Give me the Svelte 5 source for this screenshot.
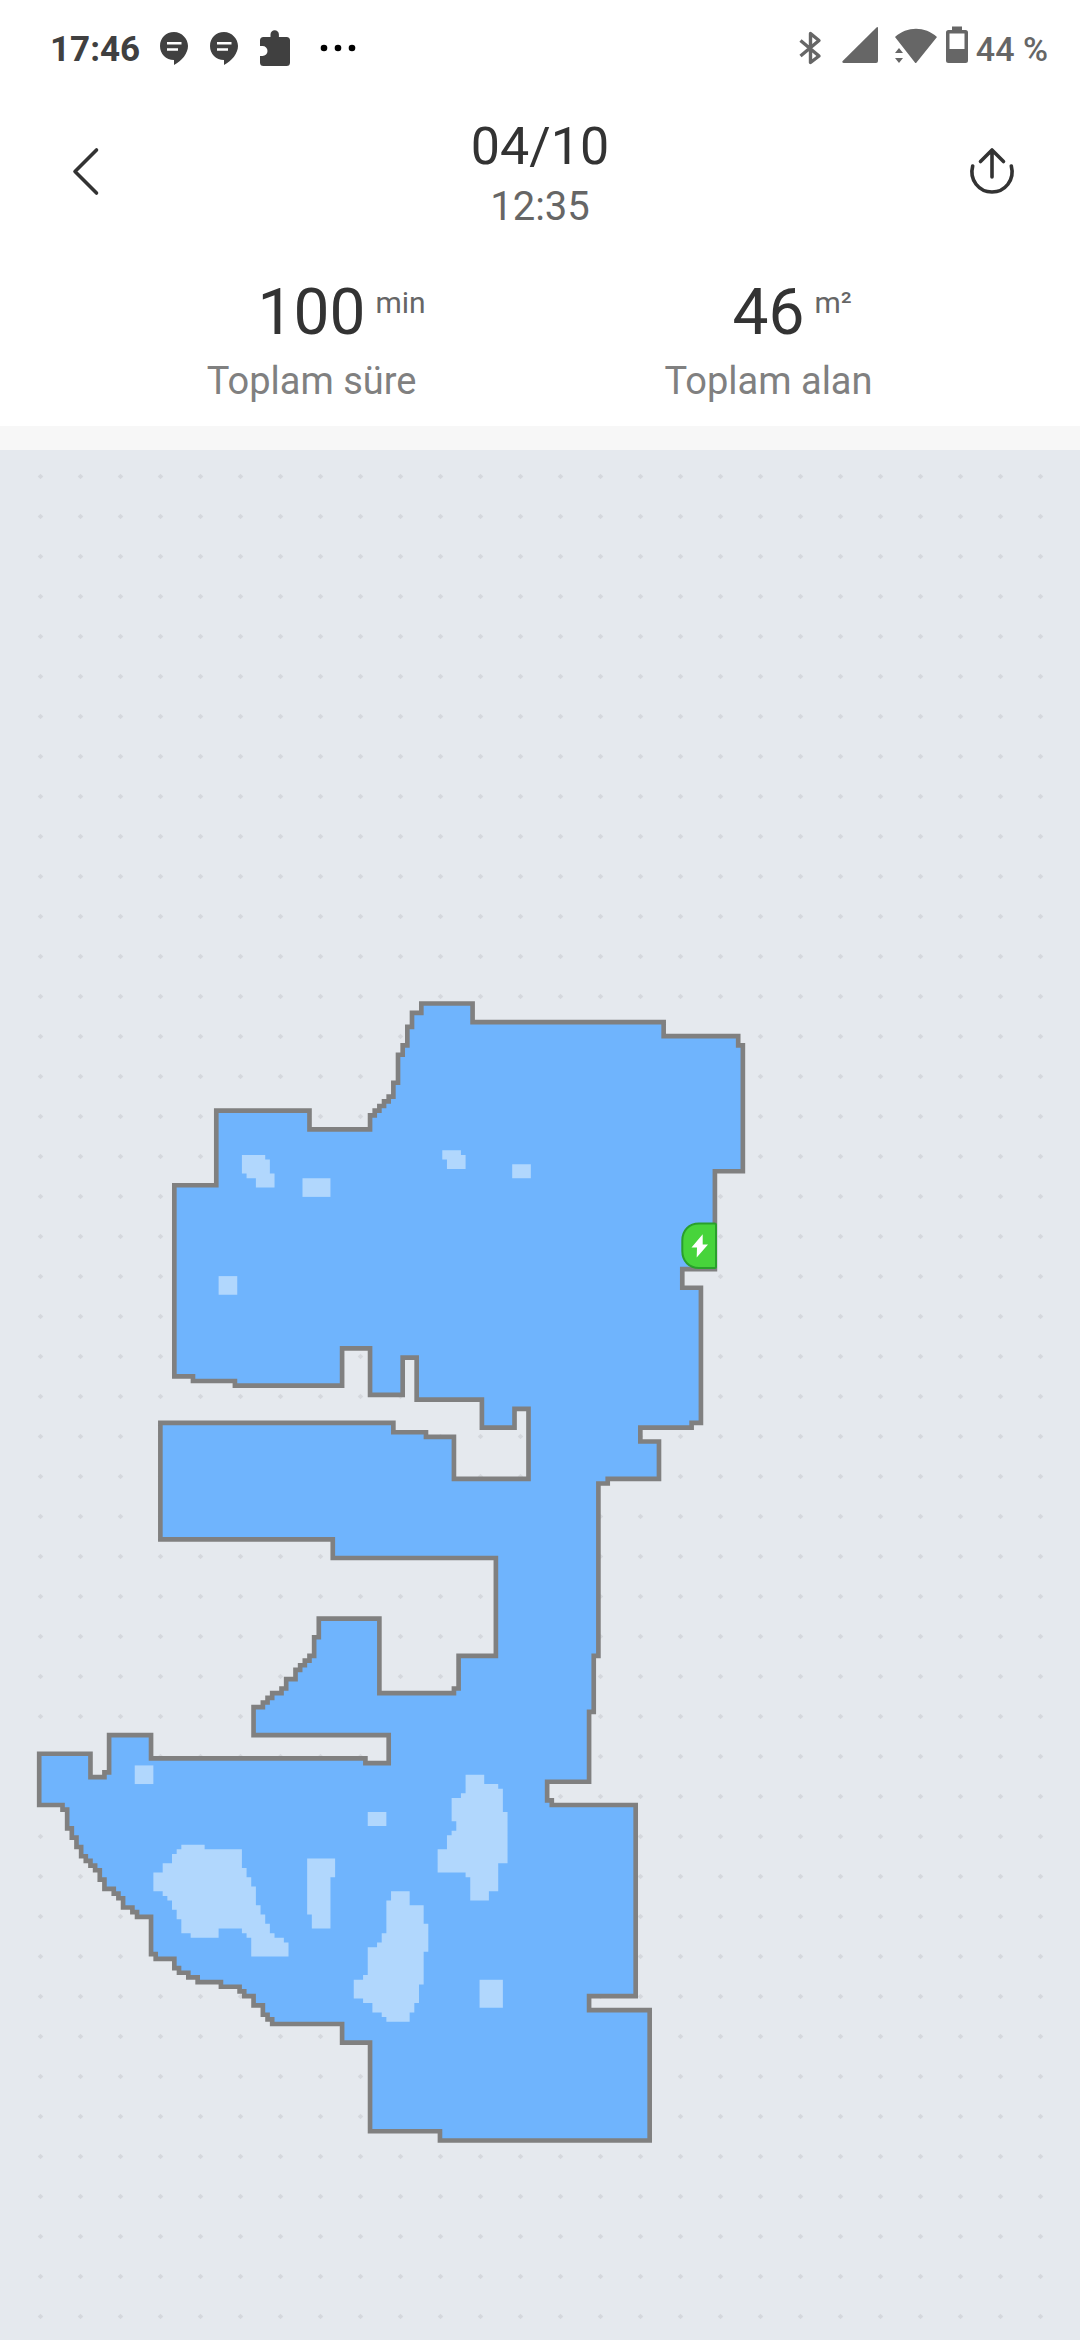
<script>
    export let date = '04/10';
    export let time = '12:35';

    const stats = [
        { value: '100', unit: 'min', label: 'Toplam süre' },
        { value: '46', unit: 'm²', label: 'Toplam alan' }
    ];

    // outline of the cleaned area, in map cells
    const walls =
        'M82 0V2H80V5H79V9H78V11H77V17H76V20H75V21H74V22H73V23H72V24H71V27H58V23H38V39H29V80H33V81H42V82H65V74H71V84H78V76H81V85' +
        'H95V91H102V87H105V102H89V93H83V92H76V90H26V115H63V119H98V140H90V147H89V148H73V132H60V136H59V140H58V141H57V142H56V143' +
        'H55V145H53V147H52V148H50V149H49V150H48V151H46V157H75V163H70V162H24V157H15V165H14V166H11V161H0V172H5V173H6V177H7V179' +
        'H8V181H9V183H10V184H11V185H12V186H13V188H14V190H16V191H17V192H18V194H20V195H21V196H24V204H25V205H29V207H30V208H32' +
        'V209H34V210H39V211H43V212H44V213H46V215H48V217H49V218H50V219H65V223H71V242H86V244H131V216H118V213H128V172H110V171' +
        'H109V167H118V152H119V140H120V103H122V102H133V94H129V91H140V90H142V61H138V57H145V36H151V9H150V7H134V4H93V0Z';

    // spots the robot did not reach
    const gaps = [
        'M43 32H48V33H49V36H50V39H46V37H44V36H43Z',
        'M56 37h6v4h-6z',
        'M38 58h4v4h-4z',
        'M86 31H90V32H91V35H87V33H86Z',
        'M101 34h4v3h-4z',
        'M20 163h4v4h-4z',
        'M70 173h4v3h-4z',
        'M30 180H35V181H43V185H44V187H45V189H46V193H47V195H48V197H49V199H50V200H52V201H53V204H45V200H44V199H43V198H38V200H32V199H30V196H29V194H28V192H27V191H26V190H24V186H26V184H28V182H29V181H30Z',
        'M57 183H63V187H62V198H58V195H57Z',
        'M91 165H95V167H98V168H99V173H100V184H98V190H96V192H92V187H91V186H85V181H87V178H88V177H89V175H88V170H90V169H91Z',
        'M75 190H79V193H82V197H83V203H82V210H81V214H80V216H79V218H74V217H73V216H71V214H69V213H67V209H69V208H70V202H72V201H73V199H74V192H75Z',
        'M94 209h5v6h-5z'
    ];
</script>

<div class="page">
    <div class="status-bar">
        <div class="status-left">
            <span class="clock">17:46</span>
            {#each [1, 2] as n (n)}
                <svg width="30" height="48" viewBox="0 0 30 48" aria-hidden="true">
                    <path fill="#404040" d="M14 7C6 7 0 13 0 21s6 14 14 14v5c8-4 14-12 14-19S22 7 14 7Z" />
                    <path stroke="#fff" stroke-width="2.6" d="M7 18.2h14.500M7 24.500h11" />
                </svg>
            {/each}
            <svg width="30" height="48" viewBox="0 0 30 48" aria-hidden="true">
                <path fill="#404040" d="M3.500 12H10.500V9.500a4.200 4.200 0 0 1 8.400 0V12H26.500A3.500 3.500 0 0 1 30 15.500V37.500A3.500 3.500 0 0 1 26.500 41H3.500A3.500 3.500 0 0 1 0 37.500V31H2.500a5 5 0 0 0 0-10H0V15.500A3.500 3.500 0 0 1 3.500 12Z" />
            </svg>
            <svg width="46" height="48" viewBox="0 0 46 48" aria-hidden="true">
                <circle cx="14" cy="23" r="3.300" />
                <circle cx="28" cy="23" r="3.300" />
                <circle cx="42" cy="23" r="3.300" />
            </svg>
        </div>
        <div class="status-right">
            <svg width="35" height="48" viewBox="0 0 35 48" aria-hidden="true">
                <path fill="none" stroke="#666" stroke-width="3.400" stroke-linejoin="round" d="M1.500 15.500L20 31L11.500 37.500V8.500L20 15.500L1.500 31" />
            </svg>
            <svg width="44" height="48" viewBox="0 0 44 48" aria-hidden="true">
                <path fill="#666" d="M36 2.500V36a2 2 0 0 1-2 2H1.500q-2-.5-.8-2L34.500 2.500q1-.8 1.500 0Z" />
            </svg>
            <svg width="44" height="48" viewBox="0 0 44 48" aria-hidden="true">
                <path fill="#666" d="M1 12C13 1 31 1 43 12L22.500 37.500q-.8 1-1.600 0ZM1 28l4-5 4 5ZM1 33h8l-4 5Z" />
            </svg>
            <svg width="22" height="48" viewBox="0 0 22 48" aria-hidden="true">
                <path fill="#666" fill-rule="evenodd" d="M6 1.500H16V5H19.500A2.500 2.500 0 0 1 22 7.500V35.500A2.500 2.500 0 0 1 19.500 38H2.500A2.500 2.500 0 0 1 0 35.500V7.500A2.500 2.500 0 0 1 2.500 5H6ZM3.500 8.500V24H18.500V8.500Z" />
            </svg>
            <span class="battery">44 %</span>
        </div>
    </div>

    <header class="header">
        <button class="icon-btn" aria-label="Geri">
            <svg width="56" height="56" viewBox="0 0 56 56" fill="none" stroke="#333" stroke-width="3.600" stroke-linecap="round" stroke-linejoin="round">
                <path d="M36.500 3L15 24.500L36.500 46" />
            </svg>
        </button>
        <div class="title">
            <h1>{date}</h1>
            <p>{time}</p>
        </div>
        <button class="icon-btn" aria-label="Paylaş">
            <svg width="56" height="56" viewBox="0 0 56 56" fill="none" stroke="#333" stroke-width="3.600" stroke-linecap="round" stroke-linejoin="round">
                <path d="M28 30V3M16.500 14.500L28 3L39.500 14.500" />
                <path d="M8.700 19C5 33 15 45 28 45S51 33 47.300 19" />
            </svg>
        </button>
    </header>

    <section class="stats">
        {#each stats as stat (stat.label)}
            <div class="stat">
                <div class="stat-value">
                    <span class="number">{stat.value}</span>
                    <span class="unit">{stat.unit}</span>
                </div>
                <div class="stat-label">{stat.label}</div>
            </div>
        {/each}
    </section>

    <main class="map">
        <svg viewBox="0 0 1080 1890" role="img" aria-label="Temizlik haritası">
            <defs>
                <pattern id="dots" x="20" y="6" width="40" height="40" patternUnits="userSpaceOnUse">
                    <path fill="#d5d8dd" d="M20.500 17.700L23.300 20.500L20.500 23.300L17.700 20.500Z" />
                </pattern>
            </defs>
            <rect x="20" width="1040" height="1890" fill="url(#dots)" />
            <g transform="translate(39.200 553.500) scale(4.660)">
                <path d={walls} fill="#6fb4fd" stroke="#808080" stroke-width="1" />
                <g transform="translate(0.500 0.500)" fill="#b1d7fd">
                    {#each gaps as gap (gap)}
                        <path d={gap} />
                    {/each}
                </g>
            </g>
            <!-- charging dock -->
            <path fill="#47d43b" stroke="#2a9f2c" stroke-width="2" d="M699 773.500H714.500Q716 773.500 716 775V816.500Q716 818 714.500 818H699C689 818 682.300 811 682.300 801V790.500C682.300 780.500 689 773.500 699 773.500Z" />
            <path fill="#fff" d="M702.700 784.300L691.500 797.500H697L696.700 807.500L708 794.500H702.700Z" />
        </svg>
    </main>
</div>

<style>
:global(body) {
    margin: 0;
    background: #e5e9ee;
}

.page {
    font-family: Roboto, "Noto Sans", sans-serif;
    background: #fff;
    color: #333;
}

svg {
    display: block;
}

.status-bar {
    display: flex;
    justify-content: space-between;
    align-items: center;
    height: 98px;
    padding: 0 32px 0 50px;
    font-size: 34px;
}

.status-left {
    display: flex;
    align-items: center;
    gap: 20px;
}

.status-right {
    display: flex;
    align-items: center;
    gap: 8px;
}

.clock {
    color: #404040;
    font-size: 35px;
    font-weight: 700;
}

.battery {
    color: #666;
    font-weight: 500;
}

.header {
    display: flex;
    justify-content: space-between;
    align-items: center;
    padding: 17px 60px 0;
}

.icon-btn {
    padding: 0;
    border: none;
    background: none;
    cursor: pointer;
}

.title {
    text-align: center;
}

.title h1 {
    margin: 0;
    font-size: 52px;
    font-weight: 400;
    line-height: 64px;
}

.title p {
    margin: 0;
    color: #666;
    font-size: 40px;
    line-height: 56px;
}

.stats {
    display: flex;
    padding: 40px 83px 15px;
    border-bottom: 24px solid #f7f7f7;
}

.stat {
    flex: 1;
    text-align: center;
}

/* the number stays centred, the unit hangs on its right */
.stat-value {
    display: grid;
    grid-template-columns: 1fr auto 1fr;
}

.number {
    grid-column: 2;
    font-size: 64px;
    line-height: 76px;
}

.unit {
    margin-left: 10px;
    color: #666;
    font-size: 30px;
    line-height: 56px;
    text-align: left;
}

.stat-label {
    color: #808080;
    font-size: 38px;
    line-height: 60px;
}

.map {
    background: #e5e9ee;
}

.map svg {
    width: 100%;
    height: auto;
}
</style>
